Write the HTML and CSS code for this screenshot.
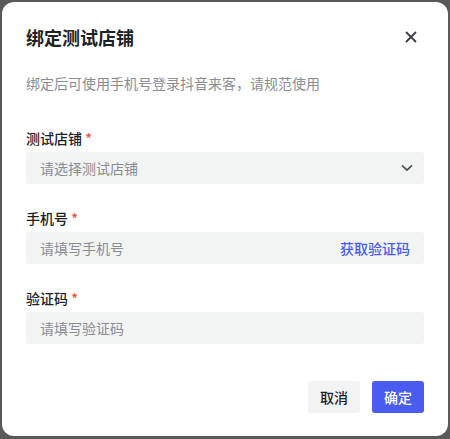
FILE: index.html
```html
<!DOCTYPE html>
<html lang="zh-CN">
<head>
    <meta charset="UTF-8">
    <meta name="viewport" content="width=device-width, initial-scale=1.0">
    <title>绑定测试店铺</title>
    <link rel="stylesheet" href="styles.css">
</head>
<body>
    <div class="dialog">
        <!-- 标题栏 -->
        <div class="dialog-header">
            <h2 class="dialog-title">绑定测试店铺</h2>
            <span class="close">
                <svg width="12" height="12" viewBox="0 0 12 12">
                    <path d="M1.5 1.5L10.5 10.5M10.5 1.5L1.5 10.5" stroke="#3a3f47" stroke-width="1.8" stroke-linecap="round"/>
                </svg>
            </span>
        </div>
        <p class="tip">绑定后可使用手机号登录抖音来客，请规范使用</p>

        <!-- 表单 -->
        <div class="form">
            <div class="field">
                <label class="label">测试店铺 <span class="req">*</span></label>
                <div class="input">
                    <span class="placeholder">请选择测试店铺</span>
                    <svg class="arrow" width="12" height="8" viewBox="0 0 12 8">
                        <path d="M1.5 1.8L6 6.2L10.5 1.8" fill="none" stroke="#4e5258" stroke-width="1.7" stroke-linecap="round" stroke-linejoin="round"/>
                    </svg>
                </div>
            </div>
            <div class="field">
                <label class="label">手机号 <span class="req">*</span></label>
                <div class="input">
                    <span class="placeholder">请填写手机号</span>
                    <span class="link">获取验证码</span>
                </div>
            </div>
            <div class="field">
                <label class="label">验证码 <span class="req">*</span></label>
                <div class="input">
                    <span class="placeholder">请填写验证码</span>
                </div>
            </div>
        </div>

        <!-- 底部按钮 -->
        <div class="footer">
            <button class="btn">取消</button>
            <button class="btn primary">确定</button>
        </div>
    </div>
</body>
</html>
```

FILE: styles.css
```css
*{
    margin: 0;
    padding: 0;
    box-sizing: border-box;
}
body{
    background-color: #595959;
    width: 450px;
    height: 439px;
    padding: 2px 2px 3px 2px;
    font-family: "Noto Sans CJK SC", "Noto Sans", sans-serif;
}
.dialog{
    background-color: white;
    border-radius: 12px;
    height: 100%;
    padding: 23px 24px 23px 24px;
    display: flex;
    flex-direction: column;
}
.dialog-header{
    display: flex;
    align-items: center;
    justify-content: space-between;
    height: 24px;
}
.dialog-title{
    font-size: 18px;
    font-weight: 700;
    color: #1f2124;
    line-height: 24px;
}
.close{
    display: flex;
    margin-right: 7px;
}
.tip{
    margin-top: 23px;
    font-size: 14px;
    line-height: 22px;
    color: #8a8d92;
}
.form{
    margin-top: 34px;
    display: flex;
    flex-direction: column;
    gap: 24px;
}
.field{
    display: flex;
    flex-direction: column;
    gap: 4px;
}
.label{
    font-size: 14px;
    font-weight: 500;
    line-height: 20px;
    color: #1f2124;
}
.req{
    color: #e5533d;
}
.input{
    height: 32px;
    background-color: #f2f3f3;
    border-radius: 3px;
    padding: 0 14px;
    display: flex;
    align-items: center;
    justify-content: space-between;
    font-size: 14px;
}
.arrow{
    margin-right: -3px;
}
.placeholder{
    color: #8a8d92;
}
.link{
    color: #4a5cf0;
    font-weight: 500;
}
.footer{
    margin-top: auto;
    display: flex;
    justify-content: flex-end;
    gap: 12px;
}
.btn{
    height: 32px;
    width: 52px;
    border: none;
    border-radius: 3px;
    background-color: #f2f3f3;
    color: #1f2124;
    font-family: inherit;
    font-size: 14px;
    font-weight: 500;
}
.btn.primary{
    background-color: #4a5cf0;
    color: white;
}
```
